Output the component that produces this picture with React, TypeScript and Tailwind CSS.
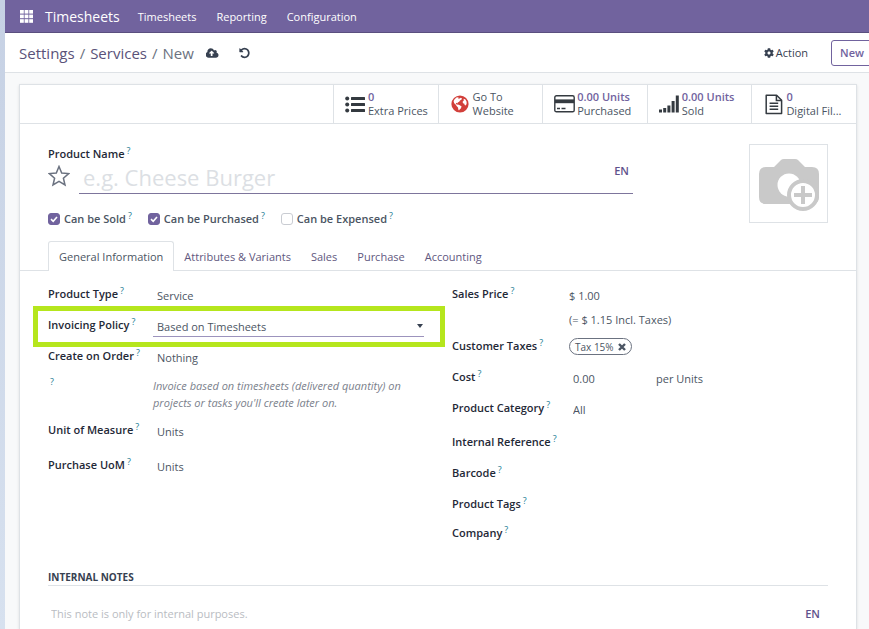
import type { ReactNode } from "react";
import { FaCog } from "react-icons/fa";

const menus = ["Timesheets", "Reporting", "Configuration"];
const tabs = ["General Information", "Attributes & Variants", "Sales", "Purchase", "Accounting"];

function Help() {
    return <sup className="ml-0.5 text-[9px] leading-none font-normal text-[#1c7c94] top-[-4px]">?</sup>;
}

function ListIcon() {
    return (
        <svg viewBox="0 0 21 17" className="h-[17px] w-[21px]" fill="#343a40">
            {[2, 8, 14].map((y) => (
                <g key={y}>
                    <circle cx="2.2" cy={y + 0.5} r="2" />
                    <rect x="6" y={y - 1} width="14" height="3" rx="0.5" />
                </g>
            ))}
        </svg>
    );
}

function GlobeIcon() {
    return (
        <svg viewBox="0 0 18 18" className="h-[18px] w-[18px]">
            <circle cx="9" cy="9" r="8.6" fill="#d23f3a" />
            <path
                fill="#fff"
                d="M3.4 4.4 5.4 2.6 7.6 2.2 7 3.4 8.8 3.6 9.8 2.8 11 3.6 10.4 4.8 9 5.4 8.2 6.8 6.8 7.6 6.4 8.4 5.4 7.8 4.8 8.4 5.6 9.4 7.8 9.8 9.6 10.8 10.6 11.6 9.8 13.4 8.6 14.4 8 15.6 7.4 14.8 7 12.6 5.8 11.2 4.6 9.6 3.2 8.2 2.6 6.2zM12.6 3.8 14.4 4.6 15.6 6.8 15.6 9 14.6 10.6 13.6 10 13.4 8.8 12 8.2 11.6 6.8 12.8 5.6z"
            />
        </svg>
    );
}

function CardIcon() {
    return (
        <svg viewBox="0 0 21 18" className="h-[18px] w-[21px]">
            <rect x="0.8" y="0.8" width="19.4" height="16" rx="1.6" fill="#fff" stroke="#343a40" strokeWidth="1.4" />
            <rect x="1" y="4.4" width="19" height="3.8" fill="#343a40" />
            <path d="M3 13.5h3M7.500 13.5h4" stroke="#343a40" strokeWidth="1.4" />
        </svg>
    );
}

function SignalIcon() {
    return (
        <svg viewBox="0 0 20 18" className="h-[18px] w-5" fill="#343a40">
            <rect x="0" y="14.5" width="3" height="3" />
            <rect x="4.2" y="13" width="3" height="4.5" />
            <rect x="8.4" y="10.5" width="3" height="7" />
            <rect x="12.6" y="6" width="3" height="11.5" />
            <rect x="16.8" y="0.5" width="3" height="17" />
        </svg>
    );
}

function FileIcon() {
    return (
        <svg viewBox="0 0 18 21" className="h-[21px] w-[18px]" fill="none" stroke="#343a40" strokeWidth="1.5">
            <path d="M1.2 1.2h10.4l5 5v13.4H1.2z" strokeLinejoin="round" />
            <path d="M11.4 1.2v5.2h5.2M4.6 9.2h8.6M4.6 12.2h8.6M4.6 15.2h8.6" />
        </svg>
    );
}

function CameraIcon() {
    return (
        <svg viewBox="0 0 62 54" className="h-[54px] w-[62px]">
            <path
                fill="#c9c9c9"
                d="M8 9h8l7-7q1-1 3-1h11q2 0 3 1l7 7h7q7 0 7 7v23q0 7-7 7H8q-7 0-7-7V16q0-7 7-7z"
            />
            <circle cx="31" cy="27" r="11.5" fill="#fff" />
            <circle cx="45" cy="37" r="14" fill="#fff" stroke="#c9c9c9" strokeWidth="4" />
            <path d="M36 37h18M45 28v18" stroke="#c9c9c9" strokeWidth="4" />
        </svg>
    );
}

const stats = [
    { icon: <ListIcon />, value: "0", label: "Extra Prices" },
    { icon: <GlobeIcon />, value: "", label: "Go To Website" },
    { icon: <CardIcon />, value: "0.00 Units", label: "Purchased" },
    { icon: <SignalIcon />, value: "0.00 Units", label: "Sold" },
    { icon: <FileIcon />, value: "0", label: "Digital Fil..." },
];

function Check({ label, checked }: { label: string; checked?: boolean }) {
    return (
        <label className="flex items-center font-semibold text-[#4b5563]">
            <span className="relative mr-1 h-3 w-3">
                <input
                    type="checkbox"
                    defaultChecked={checked}
                    className="peer block h-3 w-3 appearance-none rounded-[3px] border border-[#c9ccd2] bg-white checked:border-[#71639e] checked:bg-[#71639e]"
                />
                <svg viewBox="0 0 12 12" className="pointer-events-none absolute inset-0 hidden h-3 w-3 peer-checked:block">
                    <path d="M3 6.2 5.2 8.3 9 4" fill="none" stroke="#fff" strokeWidth="1.6" />
                </svg>
            </span>
            <span>{label}<Help /></span>
        </label>
    );
}

function Row({ label, id, height, children }: { label: string; id: string; height: string; children?: ReactNode }) {
    return (
        <div className={`flex items-start ${height}`}>
            <label htmlFor={id} className="w-[105px] shrink-0 whitespace-nowrap font-semibold text-[#1f2937] in-[.wide]:w-[117px]">
                {label}<Help />
            </label>
            {children}
        </div>
    );
}

const field = "min-w-0 flex-1 bg-transparent px-1 pt-0.5 outline-none";

export default function App() {
    return (
        <div className="flex h-screen overflow-hidden bg-linear-to-b from-[#c6d1e4] to-[#d7e1ef] pl-[5px] font-['Open_Sans','Noto_Sans',sans-serif] text-[11px] leading-4 text-[#4b5563]">
            <div className="flex min-w-0 flex-1 flex-col bg-[#f8f9fa]">
                <nav className="flex h-[33px] shrink-0 items-center border-b border-[#5a4f7f] bg-[#71639e] pt-px pr-4 pl-[15px] text-white">
                    <button aria-label="Apps">
                        <svg viewBox="0 0 13 13" className="h-[13px] w-[13px]" fill="#fff">
                            {[0, 4.6, 9.2].map((y) => [0, 4.6, 9.2].map((x) => <rect key={`${x}-${y}`} x={x} y={y} width="3.8" height="3.6" />))}
                        </svg>
                    </button>
                    <a href="#" className="ml-3 text-[14px]">Timesheets</a>
                    <div className="ml-[18px] flex gap-5">
                        {menus.map((item) => <a key={item} href="#">{item}</a>)}
                    </div>
                </nav>

                <header className="flex h-10 shrink-0 items-center border-b border-[#dee2e6] bg-white pt-px pl-3.5">
                    <div className="flex gap-[5px] text-[15px] text-[#6b7280]">
                        <a href="#" className="text-[#5a5279]">Settings</a>
                        <span>/</span>
                        <a href="#" className="text-[#5a5279]">Services</a>
                        <span>/</span>
                        <span>New</span>
                    </div>
                    <button aria-label="Save" className="ml-3">
                        <svg viewBox="0 0 1920 1792" className="h-3 w-[13px]" fill="#374151">
                            <path d="M1216 928q0-14-9-23l-352-352q-9-9-23-9t-23 9l-351 351q-10 12-10 24 0 14 9 23t23 9h224v352q0 13 9.500 22.500t22.500 9.500h192q13 0 22.500-9.500t9.500-22.500v-352h224q13 0 22.500-9.500t9.500-22.500zm640 288q0 159-112.500 271.500t-271.500 112.500h-1088q-185 0-316.500-131.500t-131.500-316.500q0-130 70-240t188-165q-2-30-2-43 0-212 150-362t362-150q156 0 285.500 87t188.500 231q71-62 166-62 106 0 181 75t75 181q0 76-41 138 130 31 213.500 135.500t83.500 238.500z" />
                        </svg>
                    </button>
                    <button aria-label="Discard" className="ml-5">
                        <svg viewBox="0 0 1536 1792" className="h-3 w-[11px]" fill="#374151">
                            <path d="M1536 896q0 156-61 298t-164 245-245 164-298 61q-172 0-327-72.500t-264-204.500q-7-10-6.500-22.500t8.500-20.500l137-138q10-9 25-9 16 2 23 12 73 95 179 147t225 52q104 0 198.500-40.500t163.500-109.500 109.500-163.500 40.500-198.500-40.500-198.500-109.500-163.500-163.500-109.500-198.500-40.500q-98 0-188 35.500t-160 101.500l137 138q31 30 14 69-17 40-59 40h-448q-26 0-45-19t-19-45v-448q0-42 40-59 39-17 69 14l130 129q107-101 244.500-156.500t284.500-55.500q156 0 298 61t245 164 164 245 61 298z" />
                        </svg>
                    </button>
                    <button className="ml-auto flex items-center gap-0.5 font-medium text-[#374151]">
                        <FaCog className="h-2.5 w-2.5" />
                        Action
                    </button>
                    <button className="-mr-2 ml-[23px] h-[26px] rounded-[3px] border border-[#71639e] px-2 pr-3 font-semibold text-[#71639e]">New</button>
                </header>

                <main className="mx-3.5 mt-[11px] mr-3 flex-1 border border-b-0 border-[#dee2e6] bg-white shadow-sm">
                    <div className="flex h-[39px] justify-end border-b border-[#dee2e6]">
                        <div className="flex w-[523px]">
                            {stats.map(({ icon, value, label }) => (
                                <button key={label} className="flex min-w-0 flex-1 items-center gap-0.5 border-l border-[#dee2e6] pl-[11px] text-left leading-[14px]">
                                    <span className="flex w-[21px] shrink-0 justify-center">{icon}</span>
                                    <span className="min-w-0">
                                        {value && <span className="block whitespace-nowrap font-semibold text-[#71639e]">{value}</span>}
                                        <span className={value ? "block whitespace-nowrap" : "block w-12"}>{label}</span>
                                    </span>
                                </button>
                            ))}
                        </div>
                    </div>

                    <section className="flex items-start justify-between px-7 pt-5">
                        <div className="w-[585px] pt-0.5">
                            <label htmlFor="name" className="block leading-[15px] font-semibold text-[#1f2937]">Product Name<Help /></label>
                            <div className="flex items-center gap-[9px]">
                                <button aria-label="Favorite" className="pb-1">
                                    <svg viewBox="0 0 22 22" className="h-[22px] w-[22px]" fill="none" stroke="#6b7280" strokeWidth="1.5">
                                        <path d="m11 1.5 2.700 6.500 7 .6-5.300 4.600 1.600 6.800-6-3.600-6 3.600 1.600-6.800L1.300 8.600l7-.6z" />
                                    </svg>
                                </button>
                                <div className="flex h-[33px] flex-1 items-center border-b border-[#7d759c]">
                                    <input id="name" placeholder="e.g. Cheese Burger" className="min-w-0 flex-1 px-1 text-[22px] outline-none placeholder:text-[#dcdfe4]" />
                                    <button className="pr-1 pb-3 font-semibold text-[#5f528c]">EN</button>
                                </div>
                            </div>
                            <div className="mt-[17px] flex gap-4">
                                <Check label="Can be Sold" checked />
                                <Check label="Can be Purchased" checked />
                                <Check label="Can be Expensed" />
                            </div>
                        </div>
                        <button aria-label="Upload image" className="flex h-[79px] w-[79px] items-center justify-center border border-[#dee2e6] pt-0.5"><CameraIcon /></button>
                    </section>

                    <div role="tablist" className="mt-3.5 flex border-b border-[#dee2e6] px-7">
                        {tabs.map((tab, i) => (
                            <button
                                key={tab}
                                role="tab"
                                aria-selected={i === 0}
                                className={i === 0
                                    ? "-mb-px h-[30px] rounded-t-[3px] border border-b-0 border-[#dee2e6] bg-white px-2.5 text-[#4b5563]"
                                    : "h-[29px] px-2.5 pt-0.5 text-[#5f5880]"}
                            >
                                {tab}
                            </button>
                        ))}
                    </div>

                    <div className="flex gap-7 px-7 pt-[15px]">
                        <div className="w-[376px]">
                            <Row label="Product Type" id="type" height="h-[31px]"><input id="type" defaultValue="Service" className={field} /></Row>
                            <div className="relative">
                                <Row label="Invoicing Policy" id="policy" height="h-[31px]">
                                    <select id="policy" className="h-5 min-w-0 flex-1 appearance-none border-b border-[#9c93bd] bg-transparent px-1 outline-none">
                                        <option>Based on Timesheets</option>
                                    </select>
                                </Row>
                                <span className="pointer-events-none absolute top-[7px] right-px border-x-[3px] border-t-4 border-x-transparent border-t-[#374151]" />
                                <div className="pointer-events-none absolute -top-[11px] -right-[21px] -left-[15px] h-[41px] border-[5px] border-[#b5e61d]" />
                            </div>
                            <Row label="Create on Order" id="create" height="h-[29px]"><input id="create" defaultValue="Nothing" className={field} /></Row>
                            <div className="flex h-[45px]">
                                <span className="w-[105px] shrink-0"><Help /></span>
                                <p className="leading-[17px] italic text-[#7b818c]">Invoice based on timesheets (delivered quantity) on projects or tasks you'll create later on.</p>
                            </div>
                            <Row label="Unit of Measure" id="uom" height="h-[35px]"><input id="uom" defaultValue="Units" className={field} /></Row>
                            <Row label="Purchase UoM" id="puom" height="h-[31px]"><input id="puom" defaultValue="Units" className={field} /></Row>
                        </div>

                        <div className="wide min-w-0 flex-1">
                            <Row label="Sales Price" id="price" height="h-[52px]">
                                <div className="flex-1">
                                    <input id="price" defaultValue="$ 1.00" className="block w-full pt-0.5 outline-none" />
                                    <span className="mt-2 block">(= $ 1.15 Incl. Taxes)</span>
                                </div>
                            </Row>
                            <Row label="Customer Taxes" id="taxes" height="h-[31px]">
                                <span className="flex h-[17px] items-center gap-1 rounded-full border border-[#6b7280] px-[5px] text-[10px] font-medium">
                                    Tax 15%
                                    <button id="taxes" aria-label="Remove tax">
                                        <svg viewBox="0 0 8 8" className="h-2 w-2" stroke="#4b5563" strokeWidth="2.4"><path d="m1 1 6 6M7 1 1 7" /></svg>
                                    </button>
                                </span>
                            </Row>
                            <Row label="Cost" id="cost" height="h-[31px]">
                                <input id="cost" defaultValue="0.00" className="w-[87px] px-1 pt-0.5 outline-none" />
                                <span className="pt-0.5">per Units</span>
                            </Row>
                            <Row label="Product Category" id="category" height="h-[34px]"><input id="category" defaultValue="All" className={field} /></Row>
                            <Row label="Internal Reference" id="reference" height="h-[31px]"><input id="reference" className={field} /></Row>
                            <Row label="Barcode" id="barcode" height="h-[31px]"><input id="barcode" className={field} /></Row>
                            <Row label="Product Tags" id="tags" height="h-[29px]"><input id="tags" className={field} /></Row>
                            <Row label="Company" id="company" height="h-[31px]"><input id="company" className={field} /></Row>
                        </div>
                    </div>

                    <section className="px-7 pt-3.5">
                        <h2 className="border-b border-[#dee2e6] text-[10px] leading-[15px] font-bold text-[#374151]">INTERNAL NOTES</h2>
                        <div className="mt-5 flex justify-between pr-2 pl-[3px]">
                            <input aria-label="Internal notes" placeholder="This note is only for internal purposes." className="flex-1 outline-none placeholder:text-[#b9bcc2]" />
                            <button className="font-semibold text-[#5f528c]">EN</button>
                        </div>
                    </section>
                </main>
            </div>
        </div>
    );
}
